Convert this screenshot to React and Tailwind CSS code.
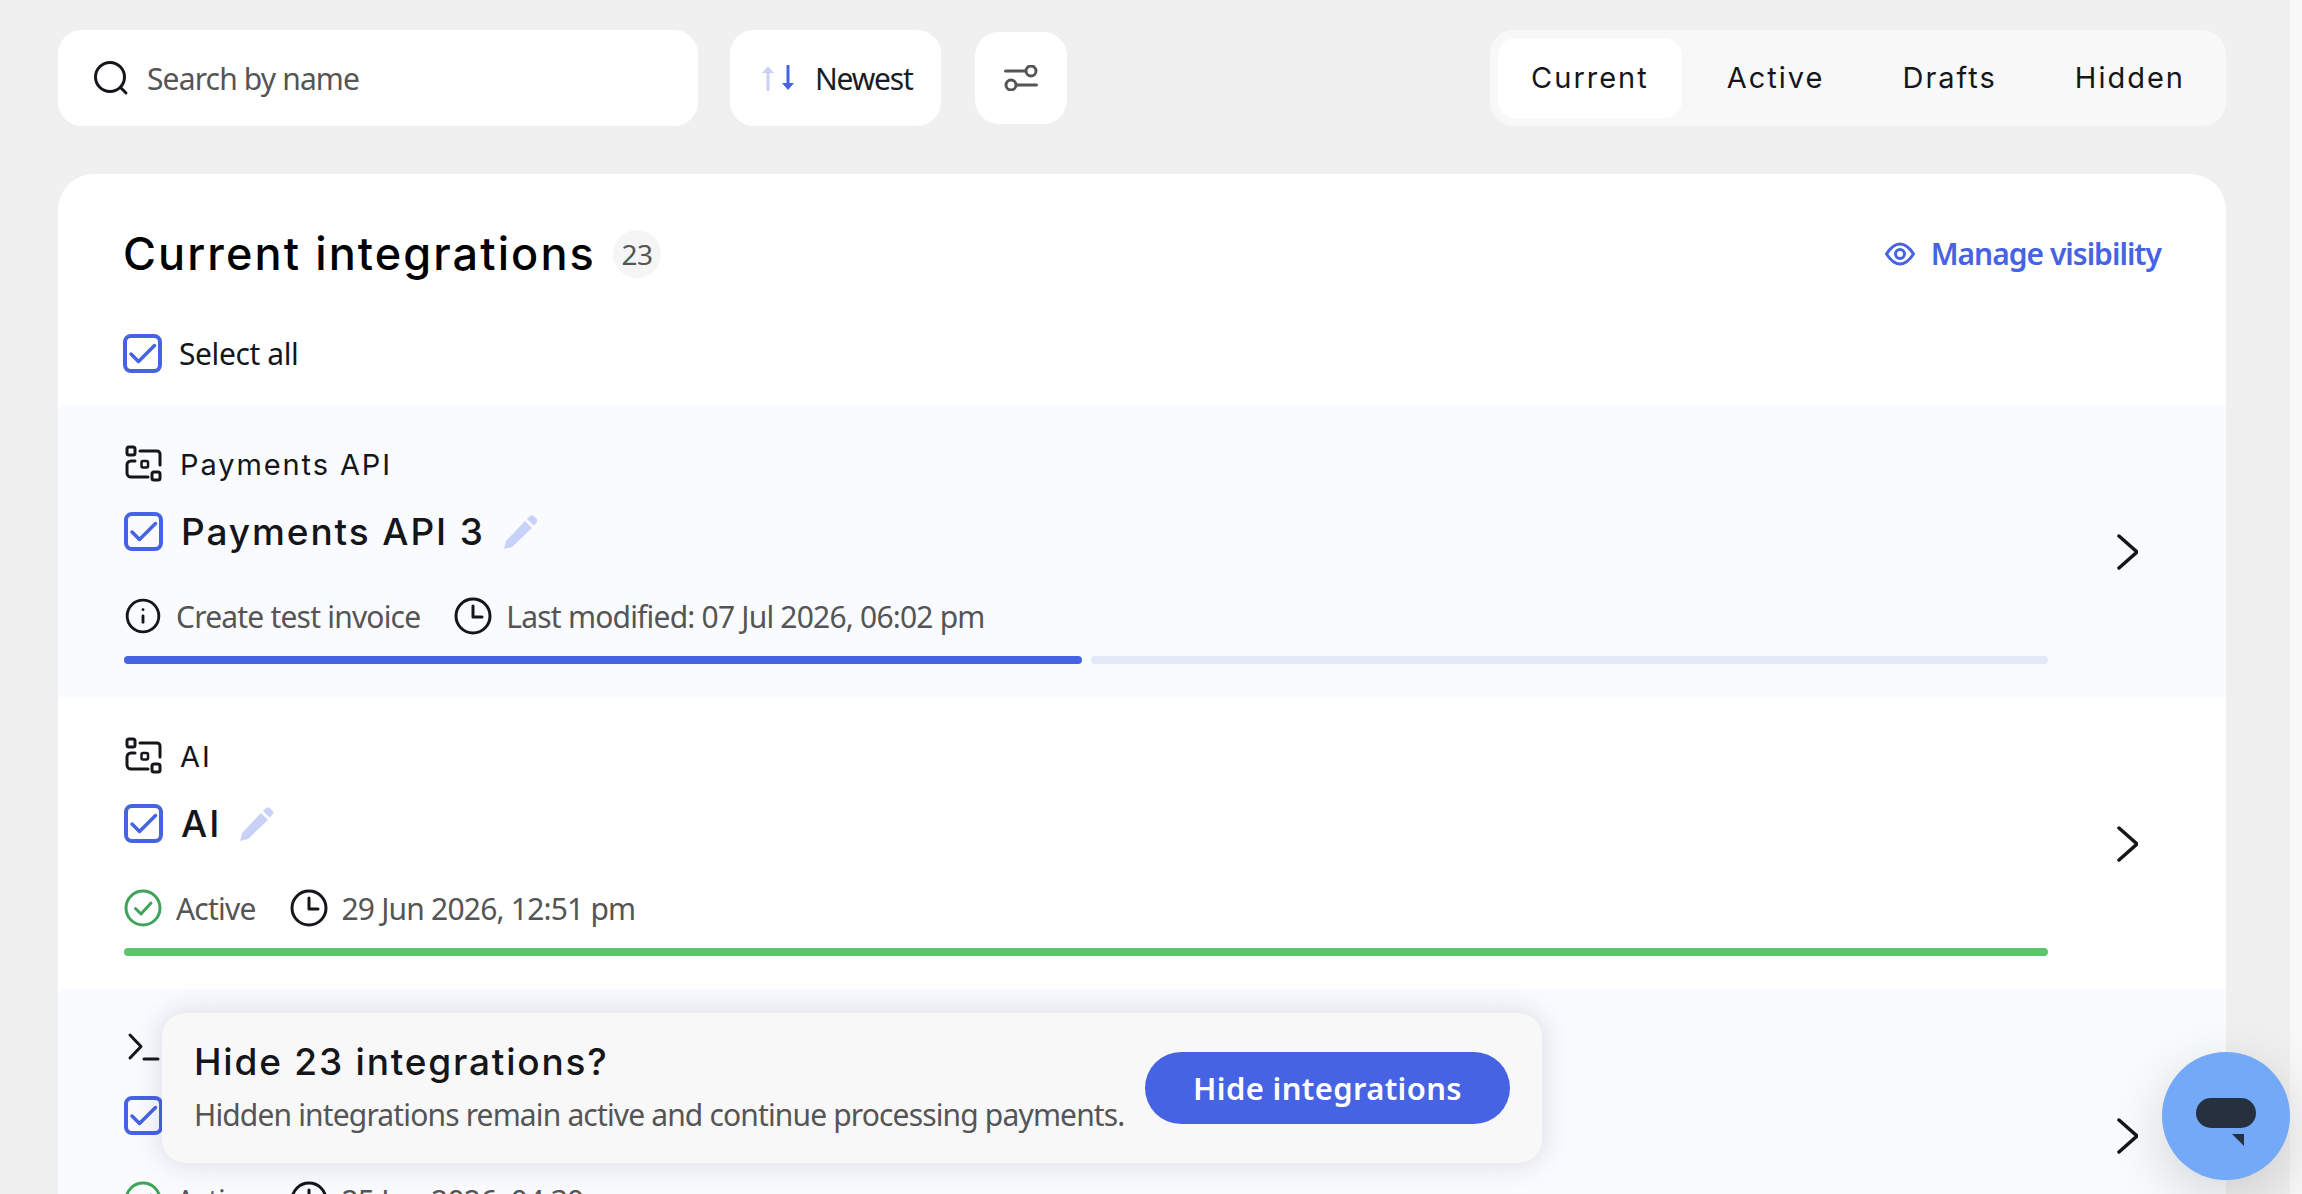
import { Info } from 'lucide-react'

const BLUE = '#4663e3'

function Checkbox() {
    return (
        <svg width="39" height="39" viewBox="0 0 39 39" fill="none" className="shrink-0">
            <rect x="2" y="2" width="35" height="35" rx="6" stroke={BLUE} strokeWidth="4" />
            <path d="M8 20l7.5 7.5L31.5 11.5" stroke={BLUE} strokeWidth="3.5" strokeLinecap="round" strokeLinejoin="round" />
        </svg>
    )
}

function ApiIcon() {
    return (
        <svg width="38" height="38" viewBox="0 0 38 38" fill="none" stroke="#14161a" strokeWidth="3" className="shrink-0">
            <rect x="2" y="2" width="8" height="8" rx="2" />
            <rect x="27" y="27" width="8" height="8" rx="2" />
            <rect x="16.5" y="16" width="6.5" height="6.5" rx="1.5" strokeWidth="2.5" />
            <path d="M15 6H32a3 3 0 0 1 3 3V20" strokeLinecap="round" />
            <path d="M10 16H6a4 4 0 0 0-4 4v8a4 4 0 0 0 4 4H23" strokeLinecap="round" />
        </svg>
    )
}

function TerminalIcon() {
    return (
        <svg width="38" height="38" viewBox="0 0 38 38" fill="none" stroke="#14161a" strokeWidth="3" strokeLinecap="round" strokeLinejoin="round" className="shrink-0">
            <path d="M5 6l11 11.5L5 29" />
            <path d="M19 30H33" />
        </svg>
    )
}

function Pencil() {
    return (
        <svg width="36" height="36" viewBox="0 0 36 36" fill="#c8d2f8" className="shrink-0">
            <path d="M1 35l2-8L22 7l7 7L9 33z" />
            <path d="M24 5l3-3a2.6 2.6 0 0 1 3.6 0l3 3a2.6 2.6 0 0 1 0 3.6l-3 3z" />
        </svg>
    )
}

function Clock() {
    return (
        <svg width="38" height="38" viewBox="0 0 38 38" fill="none" stroke="#14161a" strokeWidth="3" strokeLinecap="round" strokeLinejoin="round" className="shrink-0">
            <circle cx="19" cy="19" r="17" />
            <path d="M19 9V20H28" />
        </svg>
    )
}

function ActiveIcon() {
    return (
        <svg width="38" height="38" viewBox="0 0 38 38" fill="none" stroke="#3fa45a" strokeWidth="3" strokeLinecap="round" strokeLinejoin="round" className="shrink-0">
            <circle cx="19" cy="19" r="17" />
            <path d="M11.5 19.5l5.5 5.5L27 14" />
        </svg>
    )
}

function Chevron() {
    return (
        <svg width="21" height="36" viewBox="0 0 21 36" fill="none" stroke="#14161a" strokeWidth="3.5" strokeLinecap="round" strokeLinejoin="round" className="mt-[2px] shrink-0">
            <path d="M2 2l18 16L2 34" />
        </svg>
    )
}

function IntegrationRow({ icon, label, title, meta, stamp, done, tinted }) {
    return (
        <div className={`flex h-[292px] shrink-0 items-center pl-[66px] pr-[88px] ${tinted ? 'bg-[#fafbff]' : 'bg-white'}`}>
            <div className="flex h-full flex-1 flex-col pt-[40px]">
                <div className="flex h-[38px] items-center gap-[17px] pl-[1px] font-['Inter'] text-[29px] tracking-[1.9px] text-[#14161a]">
                    {icon}
                    <span className="mt-[2px]">{label}</span>
                </div>
                <div className="mt-[29px] flex h-[39px] items-center gap-[18px] font-['Inter'] text-[37px] font-medium tracking-[1.9px] text-[#14161a]">
                    <Checkbox />
                    <span>{title}</span>
                    <Pencil />
                </div>
                <div className="mt-[46px] flex h-[38px] items-center text-[30px] tracking-[-0.8px] text-[#555555]">
                    {done ? <ActiveIcon /> : <Info size={38} strokeWidth={1.8} color="#14161a" className="shrink-0" />}
                    <span className="ml-[14px] mr-[34px]">{meta}</span>
                    <Clock />
                    <span className="ml-[14px]">{stamp}</span>
                </div>
                <div className="mt-[21px] flex gap-[9px]">
                    {done ? (
                        <div className="h-[8px] w-full rounded-full bg-[#5cc46a]" />
                    ) : (
                        <>
                            <div className="h-[8px] w-[958px] rounded-full bg-[#4663e3]" />
                            <div className="h-[8px] flex-1 rounded-full bg-[#e3e8f8]" />
                        </>
                    )}
                </div>
            </div>
            <div className="ml-[69px]">
                <Chevron />
            </div>
        </div>
    )
}

export default function App() {
    return (
        <div className="relative flex h-screen overflow-hidden bg-[#f0f0f0] font-['Noto_Sans',sans-serif]">
            <main className="flex min-w-0 flex-1 flex-col pl-[58px] pr-[64px] pt-[30px]">
                <div className="flex h-[96px] shrink-0 items-center">
                    <div className="flex h-full w-[640px] items-center rounded-[24px] bg-white pl-[35px]">
                        <svg width="36" height="36" viewBox="0 0 36 36" fill="none" stroke="#14161a" strokeWidth="3" strokeLinecap="round" className="shrink-0">
                            <circle cx="17" cy="17" r="14.5" />
                            <path d="M28 28l5 5" />
                        </svg>
                        <span className="ml-[18px] text-[30px] tracking-[-0.85px] text-[#555555]">Search by name</span>
                    </div>
                    <button className="ml-[32px] flex h-full w-[211px] items-center rounded-[24px] bg-white pl-[31px] text-[30px] tracking-[-1.2px] text-[#1a1d22]">
                        <svg width="34" height="26" viewBox="0 0 34 26" className="shrink-0">
                            <path d="M7 25V6" stroke="#c8d2f8" strokeWidth="3" strokeLinecap="round" />
                            <path d="M1 8l6-7 6 7z" fill="#c8d2f8" />
                            <path d="M27 1V20" stroke={BLUE} strokeWidth="3" strokeLinecap="round" />
                            <path d="M21 18l6 7 6-7z" fill={BLUE} />
                        </svg>
                        <span className="ml-[20px]">Newest</span>
                    </button>
                    <button className="ml-[34px] flex h-[92px] w-[92px] items-center justify-center rounded-[24px] bg-white">
                        <svg width="34" height="26" viewBox="0 0 34 26" fill="none" stroke="#555555" strokeWidth="3" strokeLinecap="round">
                            <path d="M1.5 6H21" />
                            <circle cx="27" cy="6" r="5" />
                            <circle cx="7" cy="20" r="5" />
                            <path d="M13 20H32.5" />
                        </svg>
                    </button>
                    <div className="ml-auto flex h-full items-center gap-[12px] rounded-[24px] bg-[#f8f8f8] px-[8px] font-['Inter'] text-[29px] tracking-[2px] text-[#14161a]">
                        <div className="flex h-[80px] items-center rounded-[18px] bg-white px-[33px]">Current</div>
                        <div className="flex h-[80px] items-center px-[33px]">Active</div>
                        <div className="flex h-[80px] items-center px-[33px]">Drafts</div>
                        <div className="flex h-[80px] items-center px-[33px]">Hidden</div>
                    </div>
                </div>

                <div className="mt-[48px] flex min-h-0 flex-1 flex-col overflow-hidden rounded-t-[36px] bg-white">
                    <div className="h-[231px] shrink-0 px-[65px] pt-[56px]">
                        <div className="flex h-[48px] items-center">
                            <h1 className="font-['Inter'] text-[45px] font-medium tracking-[2.1px] text-black">Current integrations</h1>
                            <span className="ml-[17px] flex h-[48px] w-[48px] items-center justify-center rounded-full bg-[#f5f5f5] text-[28px] tracking-[-0.5px] text-[#555555]">23</span>
                            <a className="ml-auto flex items-center gap-[16px] text-[30px] font-semibold tracking-[-1px] text-[#4663e3]">
                                <svg width="30" height="24" viewBox="0 0 30 24" fill="none" stroke={BLUE} strokeWidth="3" className="shrink-0">
                                    <path d="M1.5 12C6 5 10 2 15 2s9 3 13.5 10C24 19 20 22 15 22S6 19 1.5 12z" />
                                    <circle cx="15" cy="12" r="4.5" />
                                </svg>
                                <span className="-mt-[2px]">Manage visibility</span>
                            </a>
                        </div>
                        <div className="mt-[56px] flex h-[39px] items-center gap-[17px] text-[30px] tracking-[-0.4px] text-[#14161a]">
                            <Checkbox />
                            Select all
                        </div>
                    </div>
                    <IntegrationRow tinted icon={<ApiIcon />} label="Payments API" title="Payments API 3" meta="Create test invoice" stamp="Last modified: 07 Jul 2026, 06:02 pm" />
                    <IntegrationRow done icon={<ApiIcon />} label="AI" title="AI" meta="Active" stamp="29 Jun 2026, 12:51 pm" />
                    <IntegrationRow tinted done icon={<TerminalIcon />} label="CLI" title="CLI" meta="Active" stamp="25 Jun 2026, 04:30 pm" />
                </div>
            </main>
            <aside className="w-[12px] shrink-0 bg-[#f8f8f8]" />

            <div className="absolute bottom-[31px] left-[162px] flex h-[150px] w-[1380px] items-center justify-between rounded-[24px] bg-[#f8f8f8] pl-[32px] pr-[32px] shadow-[0_0_30px_rgba(40,40,60,0.16)]">
                <div className="self-start pt-[25px]">
                    <div className="font-['Inter'] text-[37px] font-medium leading-[48px] tracking-[1.8px] text-[#14161a]">Hide 23 integrations?</div>
                    <div className="mt-[9px] whitespace-nowrap text-[30px] leading-[40px] tracking-[-0.85px] text-[#555555]">Hidden integrations remain active and continue processing payments.</div>
                </div>
                <button className="flex h-[72px] w-[365px] shrink-0 items-center justify-center rounded-full bg-[#4663e3] text-[31px] font-semibold tracking-[0.35px] text-white">Hide integrations</button>
            </div>

            <button className="absolute bottom-[14px] right-[12px] flex h-[128px] w-[128px] flex-col items-center rounded-full bg-[#74a9f8] pt-[46px] shadow-[0_16px_60px_rgba(0,0,0,0.16)]">
                <div className="h-[30px] w-[60px] rounded-full bg-[#26303f]" />
                <svg width="12" height="12" viewBox="0 0 12 12" className="ml-[24px] mt-[6px]">
                    <path d="M0 0H12V12z" fill="#26303f" />
                </svg>
            </button>
        </div>
    )
}
